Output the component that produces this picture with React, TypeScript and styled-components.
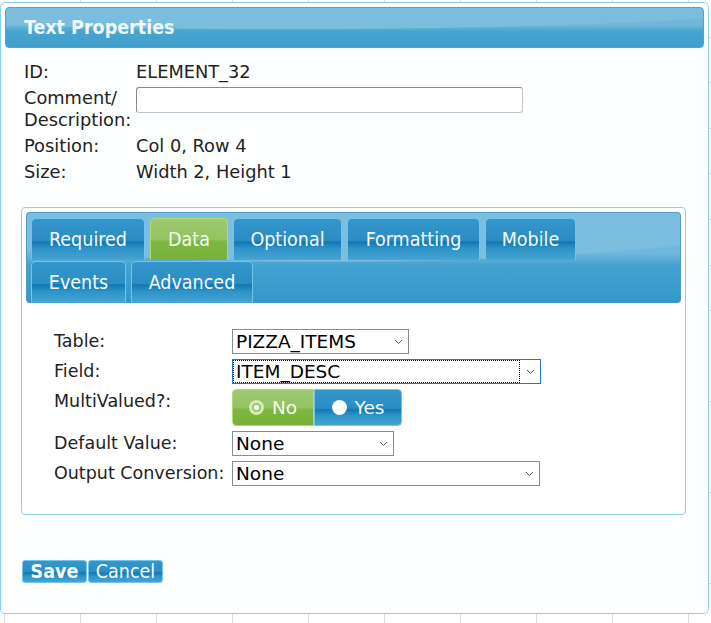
import React from 'react';
import styled, { createGlobalStyle, css } from 'styled-components';

const GlobalStyle = createGlobalStyle`
  html, body {
    margin: 0;
    padding: 0;
  }
  body {
    width: 711px;
    height: 623px;
    overflow: hidden;
    background-color: #ffffff;
    background-image:
      repeating-linear-gradient(90deg, transparent 0 4px, #d9dde0 4px 5px, transparent 5px 76px),
      repeating-linear-gradient(180deg, transparent 0 37px, #d9dde0 37px 38px, transparent 38px 45.5px);
    font-family: "DejaVu Sans", Verdana, sans-serif;
  }
`;

const blueGloss = css`
  background: linear-gradient(
    180deg,
    #3496ca 0%,
    #2b8dc3 52%,
    #1078b3 56%,
    #2f93c8 72%,
    #45a5d3 100%
  );
  border: 1px solid #72c4ec;
  color: #f5fafd;
`;

const greenGloss = css`
  background: linear-gradient(
    180deg,
    #9dc96f 0%,
    #93c362 50%,
    #80b744 54%,
    #77b03a 100%
  );
  border: 1px solid #b3da6d;
  color: #f7fbf1;
`;

const Dialog = styled.div`
  box-sizing: border-box;
  margin-top: 2px;
  width: 709px;
  height: 612px;
  padding: 4px;
  background: #fdfefe;
  border: 1px solid #8ad1f0;
  border-radius: 5px;
`;

const TitleBar = styled.div`
  box-sizing: border-box;
  height: 41px;
  padding-left: 18px;
  display: flex;
  align-items: center;
  border: 1px solid #5a9fca;
  border-radius: 4px;
  background:
    radial-gradient(ellipse 70% 55% at 40% 0%, #7bbddc 96%, transparent 100%),
    linear-gradient(180deg, #79bbdb 0%, #6fb5d8 45%, #48a3cf 60%, #3f9fcc 100%);
  color: #eef7fb;
  font-family: "DejaVu Sans Condensed", "DejaVu Sans", sans-serif;
  font-weight: bold;
  font-size: 19.5px;
`;

const Content = styled.div`
  padding: 13px 0 0 16px;
`;

const InfoGrid = styled.div`
  display: grid;
  grid-template-columns: 112px 1fr;
  row-gap: 4px;
  padding-left: 3px;
  font-size: 17.8px;
  line-height: 22px;
  color: #222;
`;

const InfoLabel = styled.div``;

const InfoValue = styled.div``;

const CommentInput = styled.input`
  box-sizing: border-box;
  width: 387px;
  height: 26px;
  margin: 0;
  border: 1px solid #c6c6c6;
  border-top-color: #8a8a8a;
  border-left-color: #8a8a8a;
  border-radius: 3px;
  background: #fff;
`;

const TabPanel = styled.div`
  box-sizing: border-box;
  width: 665px;
  margin-top: 24px;
  padding: 4px;
  border: 1px solid #8ccfee;
  border-radius: 4px;
  background: #fff;
`;

const TabBar = styled.div`
  box-sizing: border-box;
  height: 91px;
  padding: 5px 0 0 4px;
  display: flex;
  flex-direction: column;
  justify-content: flex-end;
  gap: 1px;
  border: 1px solid #4f9ccb;
  border-bottom: none;
  border-radius: 4px;
  background:
    radial-gradient(ellipse 75% 55% at 45% 0%, #7bbee0 96%, transparent 100%),
    linear-gradient(180deg, #7bbee0 0%, #6fb7dc 45%, #44a2d0 58%, #3497c9 100%);
`;

const TabRow = styled.div`
  display: flex;
  gap: 5px;
  height: 42px;
`;

const Tab = styled.div<{ $active?: boolean; $width: number }>`
  box-sizing: border-box;
  width: ${({ $width }) => $width}px;
  height: 100%;
  display: flex;
  align-items: center;
  justify-content: center;
  border-bottom: none !important;
  border-radius: 5px 5px 0 0;
  font-family: "DejaVu Sans Condensed", "DejaVu Sans", sans-serif;
  font-size: 19.5px;
  ${({ $active }) => ($active ? greenGloss : blueGloss)}
`;

const Form = styled.div`
  display: grid;
  grid-template-columns: 178px 1fr;
  row-gap: 5px;
  align-items: start;
  padding: 26px 0 24px 28px;
  font-size: 17.5px;
  color: #222;
`;

const FieldLabel = styled.div`
  line-height: 24px;
`;

const SelectBox = styled.div<{ $width: number; $focused?: boolean }>`
  box-sizing: border-box;
  width: ${({ $width }) => $width}px;
  height: 25px;
  display: flex;
  align-items: stretch;
  background: #fff;
  border: 1px solid ${({ $focused }) => ($focused ? '#1b76cc' : '#8c8c8c')};
  color: #000;
  font-size: 18.5px;
`;

const SelectText = styled.div<{ $focused?: boolean }>`
  flex: 1;
  display: flex;
  align-items: center;
  padding-left: 3px;
  ${({ $focused }) =>
    $focused &&
    css`
      outline: 1px dotted #000;
      outline-offset: -1px;
      margin-right: 2px;
    `}
`;

const Arrow = styled.div`
  width: 16px;
  display: flex;
  align-items: center;
  justify-content: center;
  padding-right: 2px;
`;

const Toggle = styled.div`
  display: flex;
  height: 37px;
  width: 170px;
  border-radius: 4px;
  overflow: hidden;
`;

const ToggleOption = styled.div<{ $on?: boolean; $width: number }>`
  box-sizing: border-box;
  width: ${({ $width }) => $width}px;
  display: flex;
  align-items: center;
  justify-content: center;
  gap: 8px;
  font-size: 18.5px;
  ${({ $on }) => ($on ? greenGloss : blueGloss)}
  border-radius: ${({ $on }) => ($on ? '4px 0 0 4px' : '0 4px 4px 0')};
`;

const RadioDot = styled.span<{ $on?: boolean }>`
  box-sizing: border-box;
  width: 15px;
  height: 15px;
  border-radius: 50%;
  ${({ $on }) =>
    $on
      ? css`
          background: radial-gradient(circle, #ffffff 0 2.5px, #9ccb63 3px 4.5px, #d6edb5 5px);
        `
      : css`
          background: #fff;
        `}
`;

const Buttons = styled.div`
  display: flex;
  gap: 1px;
  margin: 45px 0 0 1px;
`;

const Button = styled.button<{ $primary?: boolean; $width: number }>`
  box-sizing: border-box;
  width: ${({ $width }) => $width}px;
  height: 23px;
  padding: 0;
  border-radius: 3px;
  font-family: "DejaVu Sans Condensed", "DejaVu Sans", sans-serif;
  font-size: 19.5px;
  font-weight: ${({ $primary }) => ($primary ? 'bold' : 'normal')};
  line-height: 21px;
  ${blueGloss}
`;

const Chevron = () => (
  <svg width="9" height="6" viewBox="0 0 9 6">
    <path d="M1 1 L4.5 4.5 L8 1" fill="none" stroke="#555" strokeWidth="1" />
  </svg>
);

const Select: React.FC<{ value: string; width: number; focused?: boolean }> = ({
  value,
  width,
  focused,
}) => (
  <SelectBox $width={width} $focused={focused}>
    <SelectText $focused={focused}>{value}</SelectText>
    <Arrow>
      <Chevron />
    </Arrow>
  </SelectBox>
);

const tabRows = [
  [
    { label: 'Required', width: 114 },
    { label: 'Data', width: 78, active: true },
    { label: 'Optional', width: 109 },
    { label: 'Formatting', width: 133 },
    { label: 'Mobile', width: 91 },
  ],
  [
    { label: 'Events', width: 95 },
    { label: 'Advanced', width: 122 },
  ],
];

const App: React.FC = () => {
  return (
    <>
      <GlobalStyle />
      <Dialog>
        <TitleBar>Text Properties</TitleBar>
        <Content>
          <InfoGrid>
            <InfoLabel>ID:</InfoLabel>
            <InfoValue>ELEMENT_32</InfoValue>
            <InfoLabel>
              Comment/
              <br />
              Description:
            </InfoLabel>
            <InfoValue>
              <CommentInput type="text" />
            </InfoValue>
            <InfoLabel>Position:</InfoLabel>
            <InfoValue>Col 0, Row 4</InfoValue>
            <InfoLabel>Size:</InfoLabel>
            <InfoValue>Width 2, Height 1</InfoValue>
          </InfoGrid>

          <TabPanel>
            <TabBar>
              {tabRows.map((row, i) => (
                <TabRow key={i}>
                  {row.map((tab) => (
                    <Tab key={tab.label} $width={tab.width} $active={tab.active}>
                      {tab.label}
                    </Tab>
                  ))}
                </TabRow>
              ))}
            </TabBar>
            <Form>
              <FieldLabel>Table:</FieldLabel>
              <Select value="PIZZA_ITEMS" width={177} />
              <FieldLabel>Field:</FieldLabel>
              <Select value="ITEM_DESC" width={309} focused />
              <FieldLabel>MultiValued?:</FieldLabel>
              <Toggle>
                <ToggleOption $on $width={82}>
                  <RadioDot $on />
                  No
                </ToggleOption>
                <ToggleOption $width={88}>
                  <RadioDot />
                  Yes
                </ToggleOption>
              </Toggle>
              <FieldLabel>Default Value:</FieldLabel>
              <Select value="None" width={162} />
              <FieldLabel>Output Conversion:</FieldLabel>
              <Select value="None" width={308} />
            </Form>
          </TabPanel>

          <Buttons>
            <Button $primary $width={65}>
              Save
            </Button>
            <Button $width={75}>Cancel</Button>
          </Buttons>
        </Content>
      </Dialog>
    </>
  );
};

export default App;
